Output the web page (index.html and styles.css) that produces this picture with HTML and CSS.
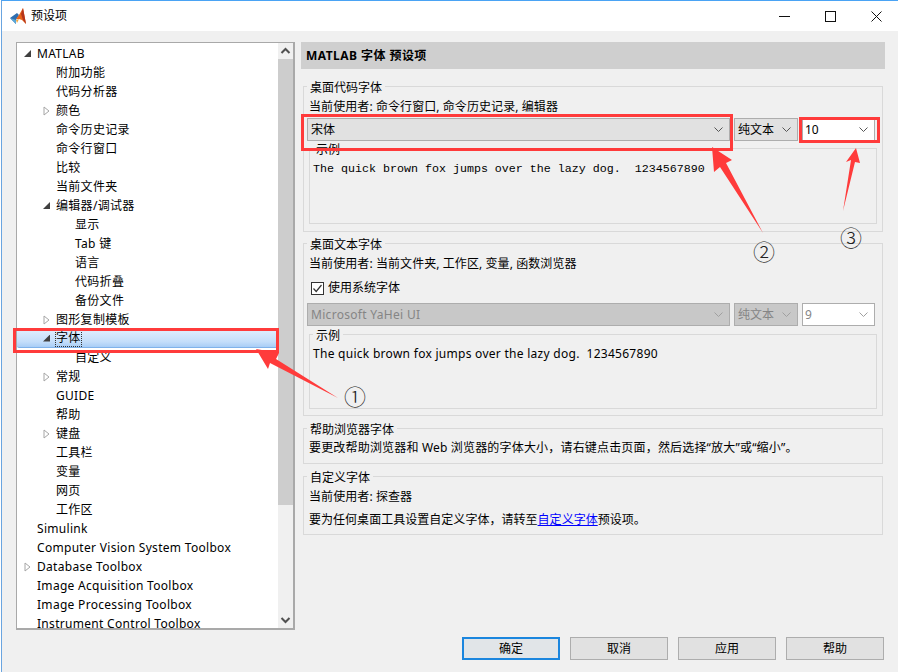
FILE: index.html
```html
<!DOCTYPE html>
<html lang="zh-CN">
<head>
<meta charset="utf-8">
<title>预设项</title>
<link rel="stylesheet" href="styles.css">
</head>
<body>
<div class="window">
  <header class="titlebar">
    <svg class="logo" width="16" height="17" viewBox="0 0 16 17">
      <polygon points="0,10 7,5 9,7 6,12 6,16" fill="#2f6fb0"/>
      <polygon points="0,10 6,12 6,16" fill="#5aa7d8"/>
      <polygon points="6,11 9,7 13,0 16,16 12,12 9,11" fill="#e8641b"/>
      <polygon points="13,0 16,16 13,12 11,6" fill="#b5351a"/>
      <polygon points="6,12 9,11 7,15" fill="#f2a33a"/>
    </svg>
    <span class="title">预设项</span>
    <div class="controls">
      <svg width="11" height="11" viewBox="0 0 11 11"><line x1="0" y1="5.5" x2="11" y2="5.5" stroke="#111"/></svg>
      <svg width="11" height="11" viewBox="0 0 11 11"><rect x="0.5" y="0.5" width="10" height="10" fill="none" stroke="#111"/></svg>
      <svg width="11" height="11" viewBox="0 0 11 11"><path d="M0.5 0.5L10.5 10.5M10.5 0.5L0.5 10.5" stroke="#111"/></svg>
    </div>
  </header>

  <main class="main">
    <nav class="tree">
      <ul class="rows">
        <li class="row l0"><i class="tw open"></i><span>MATLAB</span></li>
        <li class="row l1"><i class="tw"></i><span>附加功能</span></li>
        <li class="row l1"><i class="tw"></i><span>代码分析器</span></li>
        <li class="row l1"><svg class="tw" viewBox="0 0 7 10"><polygon points="1,1 6,5 1,9" fill="#fff" stroke="#a6a6a6"/></svg><span>颜色</span></li>
        <li class="row l1"><i class="tw"></i><span>命令历史记录</span></li>
        <li class="row l1"><i class="tw"></i><span>命令行窗口</span></li>
        <li class="row l1"><i class="tw"></i><span>比较</span></li>
        <li class="row l1"><i class="tw"></i><span>当前文件夹</span></li>
        <li class="row l1"><i class="tw open"></i><span>编辑器/调试器</span></li>
        <li class="row l2"><i class="tw"></i><span>显示</span></li>
        <li class="row l2"><i class="tw"></i><span>Tab 键</span></li>
        <li class="row l2"><i class="tw"></i><span>语言</span></li>
        <li class="row l2"><i class="tw"></i><span>代码折叠</span></li>
        <li class="row l2"><i class="tw"></i><span>备份文件</span></li>
        <li class="row l1"><svg class="tw" viewBox="0 0 7 10"><polygon points="1,1 6,5 1,9" fill="#fff" stroke="#a6a6a6"/></svg><span>图形复制模板</span></li>
        <li class="row l1 selected"><i class="tw open"></i><span class="focus">字体</span></li>
        <li class="row l2"><i class="tw"></i><span>自定义</span></li>
        <li class="row l1"><svg class="tw" viewBox="0 0 7 10"><polygon points="1,1 6,5 1,9" fill="#fff" stroke="#a6a6a6"/></svg><span>常规</span></li>
        <li class="row l1"><i class="tw"></i><span>GUIDE</span></li>
        <li class="row l1"><i class="tw"></i><span>帮助</span></li>
        <li class="row l1"><svg class="tw" viewBox="0 0 7 10"><polygon points="1,1 6,5 1,9" fill="#fff" stroke="#a6a6a6"/></svg><span>键盘</span></li>
        <li class="row l1"><i class="tw"></i><span>工具栏</span></li>
        <li class="row l1"><i class="tw"></i><span>变量</span></li>
        <li class="row l1"><i class="tw"></i><span>网页</span></li>
        <li class="row l1"><i class="tw"></i><span>工作区</span></li>
        <li class="row l0"><i class="tw"></i><span>Simulink</span></li>
        <li class="row l0"><i class="tw"></i><span>Computer Vision System Toolbox</span></li>
        <li class="row l0"><svg class="tw" viewBox="0 0 7 10"><polygon points="1,1 6,5 1,9" fill="#fff" stroke="#a6a6a6"/></svg><span>Database Toolbox</span></li>
        <li class="row l0"><i class="tw"></i><span>Image Acquisition Toolbox</span></li>
        <li class="row l0"><i class="tw"></i><span>Image Processing Toolbox</span></li>
        <li class="row l0"><i class="tw"></i><span>Instrument Control Toolbox</span></li>
      </ul>
      <div class="scrollbar">
        <svg class="sb-btn" width="15" height="16" viewBox="0 0 15 16"><path d="M3.5 10L7.5 6L11.5 10" fill="none" stroke="#505050" stroke-width="2"/></svg>
        <div class="thumb"></div>
        <div class="sb-track"></div>
        <svg class="sb-btn" width="15" height="16" viewBox="0 0 15 16"><path d="M3.5 6L7.5 10L11.5 6" fill="none" stroke="#505050" stroke-width="2"/></svg>
      </div>
    </nav>

    <section class="panel">
      <h1 class="panel-title">MATLAB 字体 预设项</h1>

      <fieldset class="group g-code">
        <legend>桌面代码字体</legend>
        <p class="usage">当前使用者: 命令行窗口, 命令历史记录, 编辑器</p>
        <div class="combos c-code">
          <div class="combo wide"><span>宋体</span><svg class="chev" width="9" height="5" viewBox="0 0 9 5"><path d="M0.5 0.5L4.5 4.5L8.5 0.5" fill="none" stroke="#555"/></svg></div>
          <div class="combo style"><span>纯文本</span><svg class="chev" width="9" height="5" viewBox="0 0 9 5"><path d="M0.5 0.5L4.5 4.5L8.5 0.5" fill="none" stroke="#555"/></svg></div>
          <div class="combo size"><span>10</span><svg class="chev" width="9" height="5" viewBox="0 0 9 5"><path d="M0.5 0.5L4.5 4.5L8.5 0.5" fill="none" stroke="#555"/></svg></div>
        </div>
        <fieldset class="sample s-code">
          <legend>示例</legend>
          <p class="mono">The quick brown fox jumps over the lazy dog.  1234567890</p>
        </fieldset>
      </fieldset>

      <fieldset class="group g-text">
        <legend>桌面文本字体</legend>
        <p class="usage">当前使用者: 当前文件夹, 工作区, 变量, 函数浏览器</p>
        <label class="check"><svg width="13" height="13" viewBox="0 0 13 13"><rect x="0.5" y="0.5" width="12" height="12" fill="#fff" stroke="#333"/><path d="M2.5 6.5L5.2 9.5L10.5 3" fill="none" stroke="#333" stroke-width="1.2"/></svg><span>使用系统字体</span></label>
        <div class="combos c-text">
          <div class="combo wide disabled"><span class="face">Microsoft YaHei UI</span><svg class="chev" width="9" height="5" viewBox="0 0 9 5"><path d="M0.5 0.5L4.5 4.5L8.5 0.5" fill="none" stroke="#a0a0a0"/></svg></div>
          <div class="combo style disabled"><span>纯文本</span><svg class="chev" width="9" height="5" viewBox="0 0 9 5"><path d="M0.5 0.5L4.5 4.5L8.5 0.5" fill="none" stroke="#a0a0a0"/></svg></div>
          <div class="combo size dim"><span>9</span><svg class="chev" width="9" height="5" viewBox="0 0 9 5"><path d="M0.5 0.5L4.5 4.5L8.5 0.5" fill="none" stroke="#a0a0a0"/></svg></div>
        </div>
        <fieldset class="sample s-text">
          <legend>示例</legend>
          <p class="sans-sample">The quick brown fox jumps over the lazy dog.  1234567890</p>
        </fieldset>
      </fieldset>

      <fieldset class="group g-help">
        <legend>帮助浏览器字体</legend>
        <p class="usage">要更改帮助浏览器和 Web 浏览器的字体大小，请右键点击页面，然后选择“放大”或“缩小”。</p>
      </fieldset>

      <fieldset class="group g-custom">
        <legend>自定义字体</legend>
        <p class="usage">当前使用者: 探查器</p>
        <p class="usage second">要为任何桌面工具设置自定义字体，请转至<a href="#">自定义字体</a>预设项。</p>
      </fieldset>
    </section>
  </main>

  <footer class="footer">
    <button class="btn default">确定</button>
    <button class="btn">取消</button>
    <button class="btn">应用</button>
    <button class="btn">帮助</button>
  </footer>
</div>

<div class="mark m1"></div>
<div class="mark m2"></div>
<div class="mark m3"></div>
<svg class="arrows" width="898" height="672" viewBox="0 0 898 672">
  <polygon points="256,349 279,353 276,359 338,398 270,363 268,369" fill="#ff3b3b"/>
  <polygon points="712,147 732,160 726,163 763,233 720,167 714,172" fill="#ff3b3b"/>
  <polygon points="856,148 860,163 855,162 843,211 851,160 846,162" fill="#ff3b3b"/>
</svg>
<span class="num n1">①</span>
<span class="num n2">②</span>
<span class="num n3">③</span>
</body>
</html>
```
FILE: styles.css
```css
* { box-sizing: border-box; }
html, body { margin: 0; padding: 0; }
body {
  position: relative;
  width: 898px;
  height: 672px;
  overflow: hidden;
  background: #fff;
  font: 12px/16px "Noto Sans", "Noto Sans CJK SC", sans-serif;
  color: #000;
}
p, h1, ul { margin: 0; padding: 0; }
.window {
  margin-left: 1px;
  width: 897px;
  height: 672px;
  border-top: 1px solid #4aa3f4;
  border-left: 1px solid #6aa5e0;
  background: #f0f0f0;
}
.titlebar {
  display: flex;
  align-items: center;
  height: 30px;
  padding-left: 8px;
  background: #fff;
}
.logo { margin-right: 5px; }
.title { font-size: 12px; flex: 1; }
.controls { display: flex; gap: 35px; padding-right: 16px; }
.controls svg { display: block; }

.main { display: flex; padding: 11px 0 0 14px; height: 599px; }
.tree {
  display: flex;
  width: 279px;
  height: 588px;
  border: 1px solid #a9a9a9;
  border-width: 1px 2px 2px 1px;
  background: #fff;
}
.rows {
  flex: 1;
  list-style: none;
  overflow: hidden;
  padding-top: 1px;
  min-width: 0;
}
.row {
  display: flex;
  align-items: center;
  height: 19px;
  white-space: nowrap;
  letter-spacing: 0.3px;
}
.l0 { padding-left: 7px; }
.l1 { padding-left: 26px; }
.l2 { padding-left: 45px; }
.tw { display: block; flex: none; width: 7px; height: 10px; margin-right: 6px; }
i.open {
  height: 7px;
  background: #404040;
  clip-path: polygon(100% 0, 100% 100%, 0 100%);
}
.selected {
  background: linear-gradient(#e2effd, #c4defa 70%, #a8cdf6);
  border-bottom: 1px solid #7fb2ea;
  border-radius: 2px 0 0 2px;
}
.focus { outline: 1px dotted #333; outline-offset: 0; }
.scrollbar {
  display: flex;
  flex-direction: column;
  width: 15px;
  flex: none;
  background: #f0f0f0;
}
.sb-btn { display: block; flex: none; }
.thumb { height: 446px; background: #cdcdcd; }
.sb-track { flex: 1; }

.panel { width: 584px; margin-left: 6px; }
.panel-title {
  height: 27px;
  padding-left: 5px;
  background: #cfcfcf;
  font-size: 12px;
  font-weight: 700;
  line-height: 27px;
  letter-spacing: 0.45px;
}
fieldset {
  min-width: 0;
  margin: 0;
  border: 1px solid #d9d9d9;
  padding: 0;
}
legend {
  padding: 4px 3px 0;
  line-height: 14px;
}
.group { margin: 3px 2px 0; padding: 0 7px 0 3px; }
.g-code { margin-top: 8px; padding-bottom: 7px; }
.g-text { margin-top: 2px; padding-bottom: 6px; }
.g-help { padding-bottom: 7px; }
.g-custom { padding-bottom: 6px; }
.usage { margin-top: 4px; padding-left: 2px; white-space: nowrap; letter-spacing: 0.08px; }
.g-help .usage { margin-top: 3px; letter-spacing: 0.18px; }
.usage.second { margin-top: 7px; letter-spacing: 0.03px; }
a { color: #0000ff; text-decoration: underline; }

.combos { display: flex; gap: 4px; }
.c-code { margin-top: 3px; }
.c-text { margin-top: 7px; }
.combo {
  display: flex;
  align-items: center;
  justify-content: space-between;
  height: 23px;
  padding: 0 6px 0 3px;
  border: 1px solid #adadad;
  background: #e1e1e1;
}
.wide { width: 423px; }
.style { width: 64px; }
.size { width: 73px; padding-left: 2px; background: #fff; }
.chev { display: block; flex: none; }
.disabled { background: #c8c8c8; color: #858585; }
.face { letter-spacing: 0.3px; }
.dim { color: #858585; }

.check { display: flex; align-items: center; gap: 4px; margin-top: 8px; padding-left: 4px; }
.check svg { display: block; }

.sample { margin-left: 2px; margin-right: -2px; padding: 0 3px; }
.s-code { margin-top: -2px; height: 85px; }
.s-text { margin-top: -1px; height: 84px; }
.mono {
  margin-top: 4px;
  font: 11.67px/16px "Liberation Mono", monospace;
  white-space: pre;
}
.sans-sample { margin-top: 3px; white-space: pre; letter-spacing: 0.28px; }

.footer {
  display: flex;
  justify-content: flex-end;
  gap: 10px;
  padding: 7px 14px 0 0;
}
.btn {
  width: 98px;
  height: 23px;
  padding: 0;
  border: 1px solid #adadad;
  background: #e1e1e1;
  font: inherit;
  color: #000;
}
.default { border: 2px solid #1b86de; background: #e1e5e8; }

.mark { position: absolute; border: 3px solid #ff3b3b; }
.m1 { left: 13px; top: 328px; width: 266px; height: 25px; }
.m2 { left: 301px; top: 114px; width: 432px; height: 37px; }
.m3 { left: 799px; top: 117px; width: 81px; height: 26px; }
.arrows { position: absolute; left: 0; top: 0; pointer-events: none; }
.num {
  position: absolute;
  width: 24px;
  font: 300 22px/24px "Noto Sans CJK SC", sans-serif;
  color: #222;
  text-align: center;
}
.n1 { left: 343px; top: 383px; }
.n2 { left: 752px; top: 238px; }
.n3 { left: 839px; top: 224px; }
```
